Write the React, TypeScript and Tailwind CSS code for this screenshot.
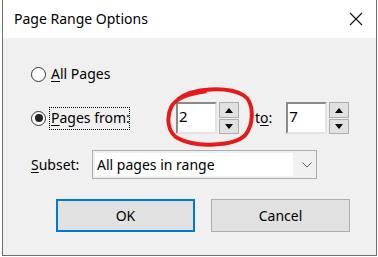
export default function App() {
    const font = { fontFamily: '"Noto Sans", "Open Sans", sans-serif' };

    return (
        <div className="w-[378px] h-[257px] bg-white overflow-hidden" style={font}>
            <div className="relative ml-[2px] w-[375px] h-[256px] border-x border-b border-[#6e6e6e] flex flex-col text-[14px] text-black whitespace-nowrap">
                <div className="h-[38px] bg-white flex items-center justify-between pl-[11px] pr-[12px]">
                    <span className="text-[14px] leading-none">Page Range Options</span>
                    <svg width="14" height="14" viewBox="0 0 14 14" className="mr-[1px]">
                        <path d="M1 1 L13 13 M13 1 L1 13" stroke="#111" strokeWidth="1.1" />
                    </svg>
                </div>
                <div className="flex-1 bg-[#f0f0f0] pl-[28px] flex flex-col">
                    <div className="mt-[26px] h-[20px] flex items-center">
                        <span className="w-[15px] h-[15px] rounded-full border border-[#333] bg-white" />
                        <span className="ml-[5px] leading-none">
                            <span className="underline underline-offset-2">A</span>ll Pages
                        </span>
                    </div>
                    <div className="mt-[18px] h-[32px] flex items-center">
                        <span className="w-[15px] h-[15px] rounded-full border border-[#333] bg-white flex items-center justify-center">
                            <span className="w-[8px] h-[8px] rounded-full bg-[#222]" />
                        </span>
                        <span className="ml-[3px] w-[81px] h-[23px] border border-dotted border-black flex items-center pl-[1px] leading-none">
                            <span className="underline underline-offset-2">P</span>ages from:
                        </span>
                        <div className="ml-[46px] flex">
                            <div className="w-[41px] h-[32px] bg-white border-2 border-t-[#8a8a8a] border-l-[#8a8a8a] border-r-[#e4e4e4] border-b-[#e4e4e4] pl-[1px] pt-[5px] leading-none text-[15px]">2</div>
                            <div className="ml-[2px] w-[20px] flex flex-col justify-between">
                                <div className="h-[16px] bg-[#e1e1e1] border border-[#adadad] flex items-center justify-center">
                                    <svg width="8" height="5" viewBox="0 0 8 5"><path d="M0 5 L4 0 L8 5 Z" fill="#000" /></svg>
                                </div>
                                <div className="h-[15px] bg-[#e1e1e1] border border-[#adadad] flex items-center justify-center">
                                    <svg width="8" height="5" viewBox="0 0 8 5"><path d="M0 0 L8 0 L4 5 Z" fill="#000" /></svg>
                                </div>
                            </div>
                        </div>
                        <span className="ml-[16px] leading-none">
                            t<span className="underline underline-offset-2">o</span>:
                        </span>
                        <div className="ml-[14px] flex">
                            <div className="w-[41px] h-[32px] bg-white border-2 border-t-[#8a8a8a] border-l-[#8a8a8a] border-r-[#e4e4e4] border-b-[#e4e4e4] pl-[1px] pt-[5px] leading-none text-[15px]">7</div>
                            <div className="ml-[2px] w-[20px] flex flex-col justify-between">
                                <div className="h-[16px] bg-[#e1e1e1] border border-[#adadad] flex items-center justify-center">
                                    <svg width="8" height="5" viewBox="0 0 8 5"><path d="M0 5 L4 0 L8 5 Z" fill="#000" /></svg>
                                </div>
                                <div className="h-[15px] bg-[#e1e1e1] border border-[#adadad] flex items-center justify-center">
                                    <svg width="8" height="5" viewBox="0 0 8 5"><path d="M0 0 L8 0 L4 5 Z" fill="#000" /></svg>
                                </div>
                            </div>
                        </div>
                    </div>
                    <div className="mt-[16px] h-[29px] flex items-center">
                        <span className="w-[61px] leading-none">
                            <span className="underline underline-offset-2">S</span>ubset:
                        </span>
                        <div className="w-[225px] h-[29px] border border-[#adadad] bg-[#f0f0f0] flex items-center p-[2px]">
                            <div className="w-[198px] h-full bg-white flex items-center pl-[2px] leading-none">All pages in range</div>
                            <svg width="10" height="6" viewBox="0 0 10 6" className="ml-[9px]">
                                <path d="M0.5 0.5 L5 5 L9.5 0.5" fill="none" stroke="#606060" strokeWidth="1" />
                            </svg>
                        </div>
                    </div>
                    <div className="mt-[20px] pl-[25px] flex gap-[16px]">
                        <button className="w-[139px] h-[33px] bg-[#e1e1e1] border-2 border-[#0078d7] leading-none">OK</button>
                        <button className="w-[139px] h-[33px] bg-[#e1e1e1] border border-[#adadad] leading-none">Cancel</button>
                    </div>
                </div>
                <svg className="absolute left-[163px] top-[86px]" width="90" height="62" viewBox="0 0 102 66" preserveAspectRatio="none">
                    <path
                        d="M14 14 C30 2 70 0 88 10 C100 17 100 40 90 52 C78 64 34 66 14 56 C2 50 0 34 6 22 C12 12 28 8 44 6"
                        fill="none"
                        stroke="#e41b1b"
                        strokeWidth="4"
                        strokeLinecap="round"
                        vectorEffect="non-scaling-stroke"
                    />
                </svg>
            </div>
        </div>
    );
}
